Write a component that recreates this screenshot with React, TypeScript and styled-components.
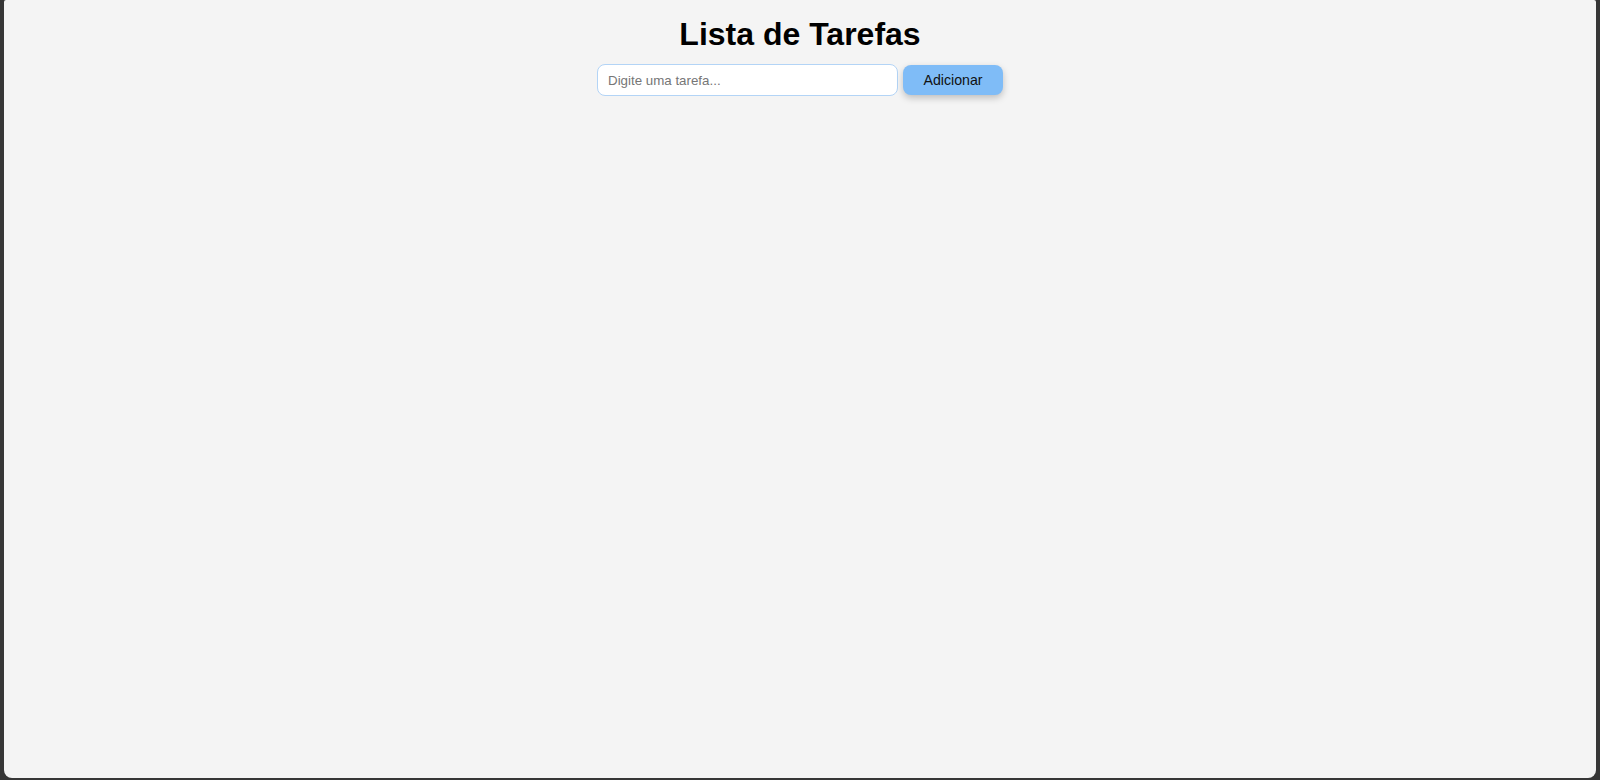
import styled, { createGlobalStyle } from 'styled-components';

const GlobalStyle = createGlobalStyle`
  html, body {
    margin: 0;
    padding: 0;
    background: #363636;
  }
  body {
    font-family: "Liberation Sans", Arial, sans-serif;
  }
`;

const Frame = styled.div`
  height: 780px;
  padding: 0 4px 2px;
  box-sizing: border-box;
`;

const Page = styled.main`
  height: 100%;
  background: #f4f4f4;
  border-radius: 2px 2px 8px 8px;
  display: flex;
  flex-direction: column;
  align-items: center;
`;

const Title = styled.h1`
  margin: 16px 0 11px;
  font-size: 32px;
  font-weight: 700;
  color: #000;
`;

const Form = styled.form`
  display: flex;
  align-items: center;
  gap: 5px;
`;

const TaskInput = styled.input`
  width: 301px;
  height: 32px;
  box-sizing: border-box;
  padding: 0 10px;
  border: 1px solid #b3d4f6;
  border-radius: 8px;
  background: #fff;
  font-family: "Liberation Sans", Arial, sans-serif;
  font-size: 13.333px;
  color: #222;
  outline: none;

  &::placeholder {
    color: #767676;
  }
`;

const AddButton = styled.button`
  width: 100px;
  height: 30px;
  border: none;
  border-radius: 8px;
  background: #7fbcf7;
  color: #111;
  font-family: "Liberation Sans", Arial, sans-serif;
  font-size: 14.2px;
  cursor: pointer;
  box-shadow: 0 3px 7px rgba(0, 0, 0, 0.22);
`;

export default function App() {
  return (
    <>
      <GlobalStyle />
      <Frame>
        <Page>
          <Title>Lista de Tarefas</Title>
          <Form onSubmit={(e) => e.preventDefault()}>
            <TaskInput type="text" placeholder="Digite uma tarefa..." />
            <AddButton type="submit">Adicionar</AddButton>
          </Form>
        </Page>
      </Frame>
    </>
  );
}
